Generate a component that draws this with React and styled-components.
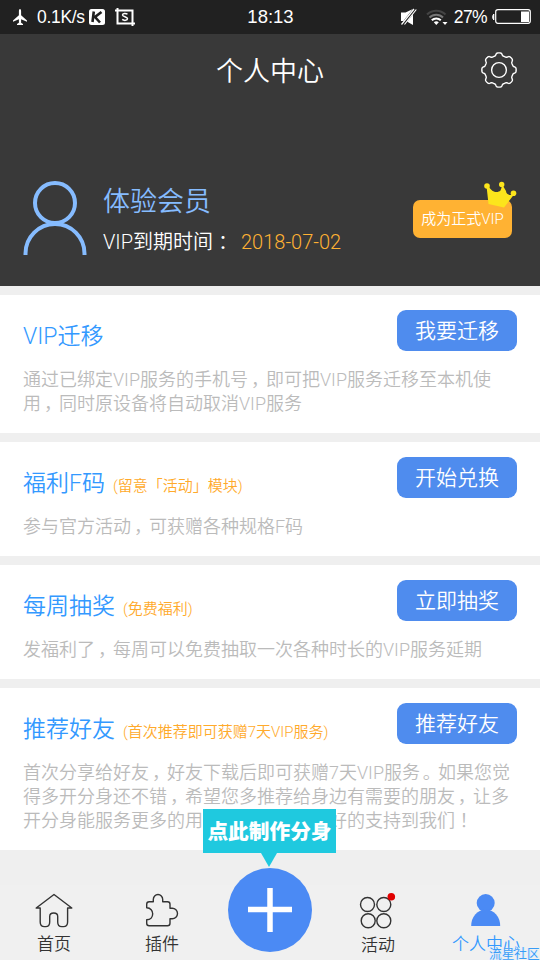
import React from 'react';
import styled, { createGlobalStyle } from 'styled-components';

const GlobalStyle = createGlobalStyle`
  * {
    box-sizing: border-box;
  }

  body {
    margin: 0;
    background: #efefef;
    font-family: Roboto, 'Noto Sans CJK SC', 'Noto Sans', sans-serif;
    font-weight: 350;
  }
`;

const Screen = styled.div`
  position: relative;
  display: flex;
  flex-direction: column;
  width: 540px;
  height: 960px;
  overflow: hidden;
  background: #efefef;
`;

const StatusBar = styled.div`
  display: grid;
  grid-template-columns: 1fr auto 1fr;
  align-items: center;
  height: 34px;
  padding: 0 9px 0 11px;
  background: #212121;
  color: #fff;
  font-family: 'Liberation Sans', sans-serif;
  font-weight: 400;
  font-size: 17.5px;
  line-height: 34px;

  svg {
    display: block;
  }
`;

const StatusGroup = styled.div`
  display: flex;
  align-items: center;
  justify-content: ${props => props.$end ? 'flex-end' : 'flex-start'};
`;

const Clock = styled.div`
  padding-right: 1px;
  font-size: 18.5px;
`;

const Speed = styled.span`
  width: 52px;
  margin-left: 8px;
  letter-spacing: -0.3px;
`;

const Percent = styled.span`
  margin: 0 5px 0 6px;
  letter-spacing: -0.6px;
`;

const CropIcon = styled.svg`
  margin-left: 10px;
`;

const MuteIconSvg = styled.svg`
  margin-right: 9px;
`;

const Profile = styled.header`
  height: 252px;
  background: #393939;
`;

const TitleBar = styled.div`
  display: grid;
  grid-template-columns: 1fr auto 1fr;
  align-items: center;
  height: 72px;
  padding: 0 23px;

  svg {
    justify-self: end;
  }
`;

const PageTitle = styled.h1`
  grid-column: 2;
  margin: 0;
  padding-top: 4px;
  font-size: 27px;
  font-weight: 350;
  line-height: 40px;
  color: #fff;
`;

const Member = styled.div`
  display: flex;
  align-items: flex-start;
  padding: 74px 28px 0 23px;
`;

const MemberInfo = styled.div`
  flex: 1;
  margin-left: 16px;
`;

const MemberName = styled.div`
  padding-top: 2px;
  font-size: 27px;
  line-height: 40px;
  color: #86bcff;
`;

const Expiry = styled.div`
  margin-top: 4px;
  font-size: 20px;
  line-height: 32px;
  color: #fff;
  white-space: nowrap;
`;

const ExpiryDate = styled.span`
  margin-left: 8px;
  color: #ffb233;
`;

const VipButton = styled.button`
  position: relative;
  width: 99px;
  height: 38px;
  margin-top: 20px;
  padding: 0;
  border: 0;
  border-radius: 7px;
  background: #ffb233;
  color: #fff;
  font: inherit;
  font-size: 15px;
  line-height: 37px;
  white-space: nowrap;
`;

const Crown = styled.svg`
  position: absolute;
  top: -19px;
  right: -5px;
`;

const Cards = styled.main`
  display: flex;
  flex-direction: column;
  gap: 9px;
  padding-top: 9px;
`;

const Card = styled.section`
  padding: 15px 23px 17px;
  background: #fff;
`;

const CardHead = styled.div`
  display: flex;
  justify-content: space-between;
  height: 58px;
`;

const CardTitle = styled.h2`
  margin: 10px 0 0;
  font-size: 23px;
  font-weight: 350;
  line-height: 34px;
  color: #3399ff;
`;

const Note = styled.span`
  margin-left: 8px;
  font-size: 15px;
  color: #ffaa2b;
`;

const ActionButton = styled.button`
  width: 120px;
  height: 41px;
  padding: 2px 0 0;
  border: 0;
  border-radius: 9px;
  background: #4f8cee;
  color: #fff;
  font: inherit;
  font-size: 21px;
  line-height: 39px;
`;

const Description = styled.p`
  margin: 0;
  font-size: 18px;
  line-height: 24px;
  color: #bbb;
  white-space: pre;
`;

// half-width glyph placed inside a full-width cell
const Mark = styled.span`
  padding: ${props => props.$centered ? '0 0.25em' : '0 0.34em 0 0.16em'};
  font-feature-settings: 'halt';
`;

const TabBar = styled.nav`
  display: grid;
  grid-template-columns: repeat(5, 1fr);
  height: 75px;
  margin-top: auto;
  background: #f0f0f0;
`;

const Tab = styled.div`
  display: flex;
  flex-direction: column;
  align-items: center;
  padding-top: 6px;
  font-size: 17px;
  line-height: 24px;
  color: ${props => props.$active ? '#3399ff' : '#333'};

  svg {
    display: block;
    margin-bottom: ${props => props.$low ? '4px' : '3px'};
  }
`;

const AddButton = styled.button`
  position: absolute;
  left: 228px;
  bottom: 8px;
  width: 84px;
  height: 84px;
  padding: 0;
  border: 0;
  border-radius: 50%;
  background: #4b8af4;

  svg {
    display: block;
    margin: 0 auto;
  }
`;

const Tooltip = styled.div`
  position: absolute;
  left: 203px;
  bottom: 107px;
  width: 133px;
  height: 44px;
  background: #1fc9df;
  color: #fff;
  font-size: 20.7px;
  font-weight: 900;
  line-height: 47px;
  text-align: center;
  white-space: nowrap;

  &:after {
    content: '';
    position: absolute;
    top: 100%;
    left: 58px;
    border: 8px solid transparent;
    border-top: 14px solid #1fc9df;
    border-bottom: 0;
  }
`;

const Watermark = styled.div`
  position: absolute;
  left: 489px;
  bottom: 0;
  font-size: 12.7px;
  font-weight: 400;
  line-height: 13px;
  color: #3a9cf5;
  white-space: nowrap;
  text-shadow: 0 0 1px #fff, 1px 0 0 #d8ebff, -1px 0 0 #d8ebff;
`;

const cards = [
  {
    title: 'VIP迁移',
    action: '我要迁移',
    text: '通过已绑定VIP服务的手机号，即可把VIP服务迁移至本机使\n用，同时原设备将自动取消VIP服务',
  },
  {
    title: '福利F码',
    note: '(留意「活动」模块)',
    action: '开始兑换',
    text: '参与官方活动，可获赠各种规格F码',
  },
  {
    title: '每周抽奖',
    note: '(免费福利)',
    action: '立即抽奖',
    text: '发福利了，每周可以免费抽取一次各种时长的VIP服务延期',
  },
  {
    title: '推荐好友',
    note: '(首次推荐即可获赠7天VIP服务)',
    action: '推荐好友',
    text: '首次分享给好友，好友下载后即可获赠7天VIP服务。如果您觉\n得多开分身还不错，希望您多推荐给身边有需要的朋友，让多\n开分身能服务更多的用户，谢谢您们最好的支持到我们！',
  },
];

// eight rounded teeth around the centre
const gearPoints = Array.from({ length: 160 }, (_, i) => {
  const angle = (i / 160) * Math.PI * 2;
  const r = 15.8 + 1.4 * Math.tanh(2.2 * Math.cos(angle * 8));
  return `${(18 + r * Math.cos(angle)).toFixed(2)},${(18 + r * Math.sin(angle)).toFixed(2)}`;
}).join(' ');

const GearIcon = () => (
  <svg width="36" height="36" fill="none" stroke="#fff" strokeWidth="1.4">
    <polygon points={gearPoints} strokeLinejoin="round" />
    <circle cx="18" cy="18" r="7.4" />
  </svg>
);

const PlaneIcon = () => (
  <svg width="18" height="18" viewBox="0 0 18 18" fill="#fff">
    <path d="M9 1c.8 0 1.100 1 1.100 2.400v3.800l5.900 5.400v1.200l-5.900-2.600v3.600l1.900 1.200v1H6v-1l1.900-1.200v-3.600L2 13.800v-1.200l5.900-5.400V3.400C7.900 2 8.200 1 9 1z" />
  </svg>
);

const MutedIcon = () => (
  <MuteIconSvg width="17" height="18" viewBox="0 0 17 18">
    <path d="M1 4.500h4.500L13 1v16l-7-4H1z" fill="#fff" />
    <path d="M15 1 2 17.500" stroke="#212121" strokeWidth="3.500" />
    <path d="M14 1 1.500 16.500M16.300 1.500 4.500 16.500" stroke="#fff" strokeWidth="1.200" />
  </MuteIconSvg>
);

const WifiIcon = () => (
  <svg width="22" height="18" viewBox="0 0 22 18" fill="none" strokeWidth="2">
    <path d="M1 6.500a13 13 0 0 1 18.500 0" stroke="#444" />
    <path d="M3.500 9.500a9.500 9.500 0 0 1 13.500 0" stroke="#777" />
    <path d="M5.800 12.300a6.500 6.500 0 0 1 9 0" stroke="#fff" />
    <path d="M7.800 14.300a4 4 0 0 1 5 0L10.300 17z" fill="#fff" />
    <path d="M16.500 14h5l-2.500 3z" fill="#fff" />
  </svg>
);

const BatteryIcon = () => (
  <svg width="39" height="16" viewBox="0 0 39 16">
    <path d="M1.800 5v6C.4 10 .4 6 1.800 5z" fill="#fff" stroke="#fff" />
    <rect x="3.700" y=".7" width="34.600" height="13.600" rx="2.200" fill="none" stroke="#fff" strokeWidth="1.200" />
    <rect x="29" y="2.500" width="8" height="10.500" fill="#fff" />
  </svg>
);

const describe = (text) => text.split(/([，。！])/).map((part, i) => (
  i % 2 ? <Mark key={i} $centered={part === '！'}>{part}</Mark> : part
));

const App = () => {
  return (
    <>
      <GlobalStyle />
      <Screen>
        <StatusBar>
          <StatusGroup>
            <PlaneIcon />
            <Speed>0.1K/s</Speed>
            <svg width="16" height="16" viewBox="0 0 16 16">
              <rect width="16" height="16" rx="2.500" fill="#fff" />
              <path d="M4.800 2.500 3.500 13M12.500 3 6 8l5 5.500" fill="none" stroke="#212121" strokeWidth="2.600" />
            </svg>
            <CropIcon width="20" height="18" viewBox="0 0 20 18" fill="none" stroke="#fff">
              <path d="M0 2.500h17.500V18M2.500 0v15.500H20" strokeWidth="2" />
              <path d="M12.500 6.300C11 5 7.500 5.100 7.500 7s5 1.500 5 3.600-3.500 2.300-5.300.8" strokeWidth="1.500" />
            </CropIcon>
          </StatusGroup>
          <Clock>18:13</Clock>
          <StatusGroup $end>
            <MutedIcon />
            <WifiIcon />
            <Percent>27%</Percent>
            <BatteryIcon />
          </StatusGroup>
        </StatusBar>

        <Profile>
          <TitleBar>
            <PageTitle>个人中心</PageTitle>
            <GearIcon />
          </TitleBar>
          <Member>
            <svg width="64" height="76" viewBox="0 0 64 76" fill="none" stroke="#86bcff" strokeWidth="4">
              <circle cx="32" cy="23" r="20" />
              <path d="M2.500 75v-1.500a29.500 29.500 0 0 1 59 0V75" />
            </svg>
            <MemberInfo>
              <MemberName>体验会员</MemberName>
              <Expiry>
                VIP到期时间<Mark $centered>：</Mark>
                <ExpiryDate>2018-07-02</ExpiryDate>
              </Expiry>
            </MemberInfo>
            <VipButton>
              成为正式VIP
              <Crown width="33" height="27" viewBox="0 0 33 27" fill="#fce51c">
                <path d="M2.500 5l2 18L20 26.500 30 13.500c-4 1.500-8 0-8-3.500L18.500 4l-2 5.500C14 12 8 12 4.500 5z" />
                <circle cx="3" cy="5" r="2.800" />
                <circle cx="17.700" cy="3.500" r="2.700" />
                <circle cx="29.500" cy="12.300" r="2.800" />
              </Crown>
            </VipButton>
          </Member>
        </Profile>

        <Cards>
          {cards.map((card) => (
            <Card key={card.title}>
              <CardHead>
                <CardTitle>
                  {card.title}
                  {card.note && <Note>{card.note}</Note>}
                </CardTitle>
                <ActionButton>{card.action}</ActionButton>
              </CardHead>
              <Description>{describe(card.text)}</Description>
            </Card>
          ))}
        </Cards>

        <TabBar>
          <Tab>
            <svg width="38" height="38" viewBox="0 0 38 38" fill="none" stroke="#333" strokeWidth="1.400" strokeLinejoin="round">
              <path d="M19 3.500 1.200 17H5.200v14q0 4.600 4.200 4.600h1.300q4 0 4-4.600v-5.500q0-3.500 4-3.500t4 3.500V31q0 4.600 4 4.600h1.700q4.200 0 4.200-4.600V17h4.200z" />
            </svg>
            首页
          </Tab>
          <Tab>
            <svg width="38" height="38" viewBox="0 0 38 38" fill="none" stroke="#333" strokeWidth="1.400" strokeLinejoin="round">
              <path d="M3.700 16.300V13.200q0-2.500 2.500-2.500h4.100V8.500a4.700 5 0 0 1 9.400 0v2.200H24.500q2.500 0 2.500 2.500v4.100h2.200a5.300 5.200 0 0 1 0 10.400H27v4.500q0 2.500-2.500 2.500H6.200q-2.500 0-2.500-2.500v-3.400c8 0 8-12 0-12z" />
            </svg>
            插件
          </Tab>
          <div />
          <Tab $low>
            <svg width="38" height="38" viewBox="0 0 38 38" fill="none" stroke="#333" strokeWidth="1.400">
              <circle cx="8.500" cy="13.500" r="7" />
              <circle cx="24.800" cy="13.500" r="7" />
              <circle cx="9.200" cy="29.700" r="7" />
              <circle cx="24.800" cy="29.700" r="7" />
              <circle cx="32.300" cy="5.700" r="3.800" fill="#e00000" stroke="none" />
            </svg>
            活动
          </Tab>
          <Tab $active>
            <svg width="38" height="38" viewBox="0 0 38 38" fill="#4b8af4">
              <circle cx="18.700" cy="12" r="9" />
              <path d="M4.200 35a14.500 16.500 0 0 1 29 0z" />
            </svg>
            个人中心
          </Tab>
        </TabBar>

        <AddButton aria-label="add">
          <svg width="44" height="44" viewBox="0 0 44 44" stroke="#fff" strokeWidth="5.500">
            <path d="M22 0v44M0 21.500h44" />
          </svg>
        </AddButton>
        <Tooltip>点此制作分身</Tooltip>
        <Watermark>流星社区</Watermark>
      </Screen>
    </>
  );
};

export default App;
